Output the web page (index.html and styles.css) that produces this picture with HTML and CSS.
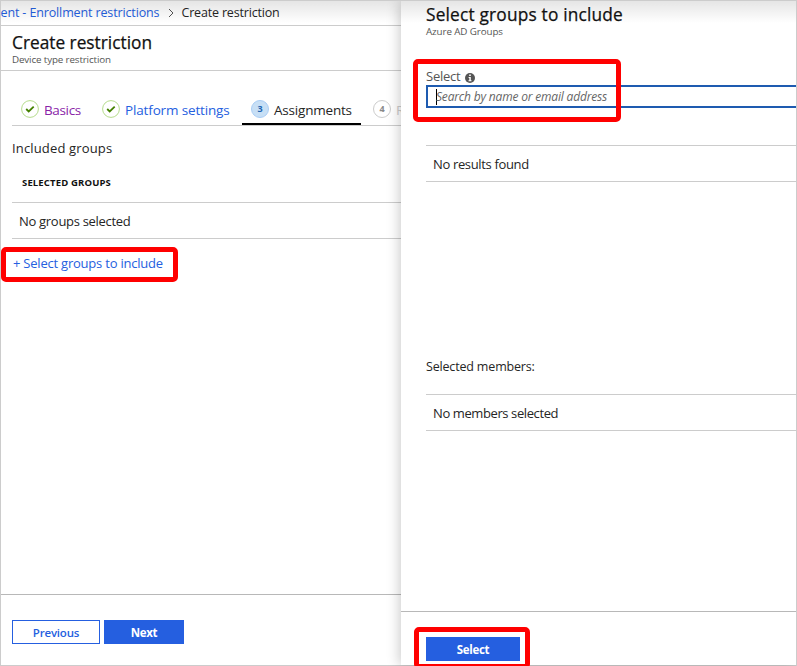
FILE: index.html
```html
<!DOCTYPE html>
<html lang="en">
<head>
<meta charset="utf-8">
<title>Create restriction</title>
<link rel="stylesheet" href="styles.css">
</head>
<body>
<div class="frame">
  <main class="blade">
    <nav class="crumbs">
      <a class="crumb-link"><span>ent - Enrollment restrictions</span></a>
      <svg class="chevron" width="6" height="10" viewBox="0 0 6 10"><path d="M1 1l4 4-4 4" fill="none" stroke="#555"/></svg>
      <span class="crumb-current">Create restriction</span>
    </nav>
    <header class="heading">
      <h1 class="title-create">Create restriction</h1>
      <p class="sub-create">Device type restriction</p>
    </header>
    <div class="tabs">
      <div class="tab basics"><svg class="badge" width="18" height="18" viewBox="0 0 18 18"><circle cx="9" cy="9" r="8.4" fill="#fff" stroke="#b5dc8c"/><path d="M5.2 9l2.5 2.4 5-4.8" fill="none" stroke="#448000" stroke-width="1.8"/></svg><span>Basics</span></div>
      <div class="tab platform"><svg class="badge" width="18" height="18" viewBox="0 0 18 18"><circle cx="9" cy="9" r="8.4" fill="#fff" stroke="#b5dc8c"/><path d="M5.2 9l2.5 2.4 5-4.8" fill="none" stroke="#448000" stroke-width="1.8"/></svg><span>Platform settings</span></div>
      <div class="tab active"><b class="badge num">3</b><span>Assignments</span></div>
      <div class="tab review"><b class="badge num">4</b><span>Review + create</span></div>
    </div>
    <section class="groups">
      <h2 class="included">Included groups</h2>
      <h3 class="column">SELECTED GROUPS</h3>
      <div class="row no-groups">No groups selected</div>
      <a class="add highlight">+ Select groups to include</a>
    </section>
    <footer class="actions">
      <button class="button secondary">Previous</button>
      <button class="button next">Next</button>
    </footer>
  </main>
  <aside class="panel">
    <header class="panel-heading">
      <h1 class="title-select">Select groups to include</h1>
      <p class="sub-select">Azure AD Groups</p>
    </header>
    <div class="field">
      <div class="label"><span>Select</span><svg width="10" height="10" viewBox="0 0 10 10"><circle cx="5" cy="5" r="5" fill="#555"/><path d="M4.2 1.6h1.6v1.5H4.2zM3.6 4h2.2v3.2h.7v1h-3v-1h.8V5h-.7z" fill="#fff"/></svg></div>
      <div class="input"><i class="caret"></i><span class="placeholder">Search by name or email address</span></div>
      <div class="search-highlight highlight"></div>
    </div>
    <div class="row results"><span>No results found</span></div>
    <h2 class="members">Selected members:</h2>
    <div class="row no-members"><span>No members selected</span></div>
    <footer class="panel-actions"><div class="select-highlight highlight"><button class="button select">Select</button></div></footer>
  </aside>
  <div class="top-shade"></div>
</div>
</body>
</html>
```
FILE: styles.css
```css
* { box-sizing: border-box; }
body, h1, h2, h3, p { margin: 0; font-weight: 400; }
body { overflow: hidden; font: 13px/18px "Open Sans", "Noto Sans", sans-serif; color: #252525; background: #fff; }
.frame { position: relative; display: flex; width: 797px; height: 666px; border: 1px solid #ccc; }
.blade { width: 400px; flex: none; display: flex; flex-direction: column; overflow: hidden; white-space: nowrap; }
.top-shade { position: absolute; z-index: 2; inset: 0 0 auto; height: 22px; background: linear-gradient(rgba(0,0,0,.1), rgba(0,0,0,0)); pointer-events: none; }
.crumbs { height: 25px; flex: none; display: flex; align-items: center; border-bottom: 1px solid #ccc; font-size: 12.5px; letter-spacing: -.13px; }
.crumb-link { color: #2560e0; width: 167px; }
.crumb-link span { margin-left: -.5px; }
.crumb-current { letter-spacing: -.18px; }
.chevron { margin-right: 7.5px; }
.heading { height: 45px; flex: none; padding: 5px 0 0 11px; border-bottom: 1px solid #ccc; }
.heading h1, .panel-heading h1 { font-size: 17.3px; line-height: 23px; height: 22px; color: #111; -webkit-text-stroke: .25px #111; }
.panel-heading .title-select { letter-spacing: .19px; }
.heading p, .panel-heading p { font-size: 9.8px; line-height: 14px; color: #555; letter-spacing: -.13px; }
.panel-heading .sub-select { letter-spacing: -.1px; }
.tabs { height: 33px; flex: none; margin: 22px 0 0 11px; display: flex; border-bottom: 1px solid #ccc; }
.tab { height: 33px; flex: none; padding: 6px 0 0 9px; display: flex; font-size: 13.5px; letter-spacing: -.15px; }
.tab span { margin-top: 2px; line-height: 18px; }
.badge { width: 18px; height: 18px; margin: 1px 5px 0 0; flex: none; }
.num { border: 1px solid #ccc; border-radius: 50%; text-align: center; font-size: 9px; line-height: 16px; color: #888; letter-spacing: 0; }
.basics { width: 81px; color: #8a24a8; letter-spacing: -.35px; }
.platform { width: 149px; color: #2560e0; }
.active { width: 119px; height: 32px; border-bottom: 2px solid #000; letter-spacing: -.2px; }
.active .num { background: #c7dff5; border-color: #a9cdf5; color: #2467b2; }
.review { padding-left: 12px; color: #ccc; }
.included { margin: 13px 0 0 11px; font-size: 13px; letter-spacing: .15px; }
.column { margin: 17px 0 0 21px; font-size: 9.5px; font-weight: 700; line-height: 17px; color: #111; letter-spacing: .15px; }
.row { height: 37px; border: solid #ccc; border-width: 1px 0; line-height: 37px; padding-left: 7px; letter-spacing: -.35px; }
.no-groups { margin: 11px 0 0 11px; letter-spacing: -.3px; }
.highlight { border: 5px solid #f00; border-radius: 5px; }
.add { display: block; width: 177px; height: 35px; margin-top: 8px; padding-left: 7px; line-height: 23px; color: #2560e0; letter-spacing: -.22px; }
.actions { margin-top: auto; height: 71px; border-top: 1px solid #b8b8b8; display: flex; gap: 4px; padding: 25px 0 0 11px; }
.button { height: 24px; padding: 2px 0 0; border: 1px solid #255fe0; background: #255fe0; color: #fff; font: 700 11.5px/20px "Open Sans", sans-serif; letter-spacing: -.3px; }
.secondary { width: 88px; background: #fff; color: #255fe0; font-weight: 600; letter-spacing: -.2px; }
.next { width: 80px; }
.panel { position: relative; z-index: 1; flex: 1; display: flex; flex-direction: column; background: #fff; box-shadow: -2px 0 12px rgba(0,0,0,.2); clip-path: inset(0 0 -1px -20px); white-space: nowrap; }
.panel-heading { padding: 2px 0 0 25px; height: 58px; flex: none; }
.field { position: relative; margin-left: 25px; height: 86px; flex: none; padding-top: 9px; }
.label { display: flex; align-items: center; gap: 5px; height: 17px; line-height: 17px; color: #555; letter-spacing: -.25px; }
.label svg { margin-top: 3px; }
.input { height: 23px; border: 2px solid #1e5bb0; border-right: 0; display: flex; align-items: center; padding-left: 8px; }
.caret { width: 1px; height: 16px; background: #000; }
.placeholder { margin-left: -1px; font-style: italic; font-size: 12px; color: #666; line-height: 18px; letter-spacing: -.18px; }
.search-highlight { position: absolute; left: -13px; top: 0; width: 208px; height: 63px; }
.results, .no-members { margin-left: 25px; flex: none; }
.members { margin: 176px 0 0 25px; font-size: 12.5px; letter-spacing: -.17px; }
.no-members { margin-top: 18px; letter-spacing: -.4px; }
.panel-actions { margin-top: auto; height: 54px; flex: none; border-top: 1px solid #b8b8b8; padding: 15px 0 0 13px; }
.select-highlight { width: 116px; height: 42px; padding: 5px 0 0 7px; }
.select { display: block; width: 94px; }
```
